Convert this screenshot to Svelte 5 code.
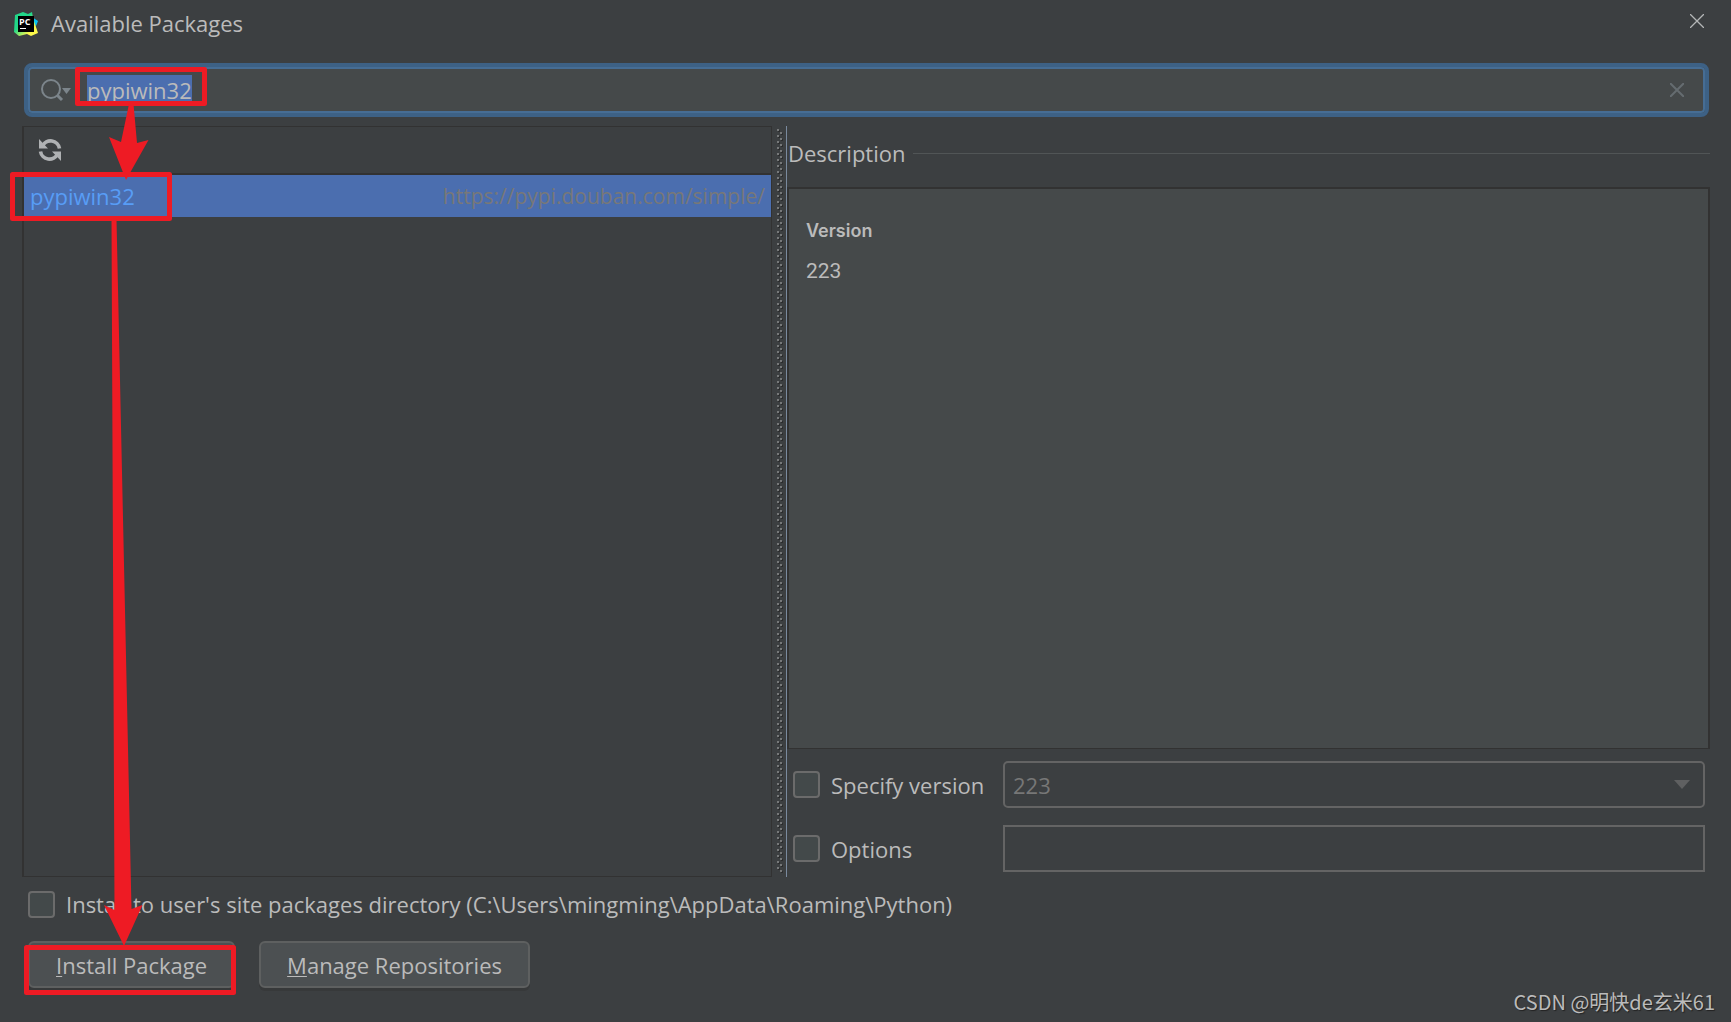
<script>
	import { onMount } from 'svelte';

	const packages = [{ name: 'pypiwin32', repo: 'https://pypi.douban.com/simple/' }];
	const versions = ['223'];

	let search = 'pypiwin32';
	let selected = 'pypiwin32';
	let version = '223';
	let specifyVersion = false;
	let useOptions = false;
	let options = '';
	let userSite = false;
	let searchBox;

	onMount(() => {
		searchBox.focus();
		searchBox.select();
	});

	function clearSearch() {
		search = '';
		searchBox.focus();
	}
</script>

<svelte:head>
	<title>Available Packages</title>
</svelte:head>

<div class="dialog">
	<header>
		<svg class="logo" viewBox="0 0 24 24" width="24" height="24">
			<defs>
				<linearGradient id="edge" x1="0" y1="0" x2="1" y2="1">
					<stop offset="0.4" stop-color="#21d789" />
					<stop offset="0.75" stop-color="#fcf84a" />
				</linearGradient>
			</defs>
			<path d="M18 5 24 9 22 14 17 12z" fill="#07c3f2" />
			<path d="M1 3 9 0 14 2 18 0 19 6 21 12 24 21 17 24 13 22 5 24 0 20z" fill="url(#edge)" />
			<rect x="4" y="4" width="16" height="16" />
			<text x="5" y="13" font-size="9" font-weight="700" fill="#fff">PC</text>
			<path d="M6 16h6v1H6z" fill="#fff" />
		</svg>
		<h1>Available Packages</h1>
		<button class="icon close" aria-label="Close">
			<svg viewBox="0 0 14 14" width="14" height="14">
				<path d="M0 0 14 14M14 0 0 14" stroke="#b4b6b7" stroke-width="1.3" />
			</svg>
		</button>
	</header>

	<div class="search">
		<svg viewBox="0 0 30 24" width="30" height="24">
			<circle cx="10" cy="11" r="9" fill="none" stroke="#7c858b" stroke-width="2" />
			<path d="M16 17 21 22" stroke="#7c858b" stroke-width="3" />
			<path d="M21 10h9l-4.500 6z" fill="#7c858b" />
		</svg>
		<input type="text" aria-label="Search packages" spellcheck="false" bind:this={searchBox} bind:value={search} />
		<button class="icon" aria-label="Clear" on:click={clearSearch}>
			<svg viewBox="0 0 14 14" width="14" height="14">
				<path d="M0 0 14 14M14 0 0 14" stroke="#656c70" stroke-width="2" />
			</svg>
		</button>
	</div>

	<main>
		<section class="list">
			<div class="toolbar">
				<button class="icon" aria-label="Reload list of packages">
					<svg viewBox="0 0 24 24" width="24" height="24">
						<g fill="none" stroke="#afb1b3" stroke-width="3.600">
							<path d="M4.500 8A9 9 0 0 1 21.500 10.500" />
							<path d="M19.500 16A9 9 0 0 1 2.500 13.500" />
						</g>
						<path d="M1 1V10.500H10zM23 23V13.500H14z" fill="#afb1b3" />
					</svg>
				</button>
			</div>
			<ul>
				{#each packages as pkg}
					<li>
						<button class:selected={selected === pkg.name} on:click={() => (selected = pkg.name)}>
							<span class="name">{pkg.name}</span>
							<span class="repo">{pkg.repo}</span>
						</button>
					</li>
				{/each}
			</ul>
		</section>

		<div class="splitter">
			<svg width="6" height="100%">
				<defs>
					<pattern id="grip" width="6" height="6" patternUnits="userSpaceOnUse">
						<path d="M1 1h2v2H1zM4 4h2v2H4z" fill="#2b2c2d" />
						<path d="M0 0h2v2H0zM3 3h2v2H3z" fill="#77797a" />
					</pattern>
				</defs>
				<rect width="6" height="100%" fill="url(#grip)" />
			</svg>
		</div>

		<section class="details">
			<h2>Description</h2>
			<div class="description">
				<h3>Version</h3>
				<p>{version}</p>
			</div>
			<div class="field">
				<label><input type="checkbox" bind:checked={specifyVersion} />Specify version</label>
				<div class="combo">
					<select aria-label="Version" disabled={!specifyVersion} bind:value={version}>
						{#each versions as v}
							<option>{v}</option>
						{/each}
					</select>
					<svg viewBox="0 0 16 9" width="16" height="9"><path d="M0 0h16L8 9z" fill="#5f6061" /></svg>
				</div>
			</div>
			<div class="field">
				<label><input type="checkbox" bind:checked={useOptions} />Options</label>
				<input class="options" type="text" aria-label="Options" disabled={!useOptions} bind:value={options} />
			</div>
		</section>
	</main>

	<label class="site">
		<input type="checkbox" bind:checked={userSite} />Install to user's site packages directory (C:\Users\mingming\AppData\Roaming\Python)
	</label>

	<footer>
		<button class="action"><u>I</u>nstall Package</button>
		<button class="action"><u>M</u>anage Repositories</button>
		<span class="watermark">CSDN @明快de玄米61</span>
	</footer>

	<!-- red marks showing the order of the steps -->
	<svg class="marks" width="240" height="1000" viewBox="0 0 240 1000">
		<g fill="none" stroke="#ee1b24" stroke-width="5" stroke-linejoin="round">
			<rect x="77.500" y="69.500" width="127" height="34" />
			<rect x="12.500" y="174.500" width="157" height="44" />
			<rect x="26.500" y="947.500" width="207" height="45" />
		</g>
		<g fill="#ee1b24">
			<path d="M129 104h4.500L137 143l11.500-3L126 180 109 137l12 5z" />
			<path d="M111.500 219h5L131.500 909l11-4L124 946 104 905l10.500 5z" />
		</g>
	</svg>
</div>

<style>
	:global(body) {
		background: #3c3f41;
	}

	.dialog {
		position: relative;
		box-sizing: border-box;
		min-height: 100vh;
		padding: 0 21px 34px 22px;
		display: flex;
		flex-direction: column;
		overflow: hidden;
		background: #3c3f41;
		color: #bbb;
		font: 22px/30px "Open Sans", "Noto Sans", sans-serif;
	}

	h1, h2, h3, p, ul {
		margin: 0;
		padding: 0;
		font: inherit;
	}

	button, input, select {
		font: inherit;
		color: inherit;
	}

	svg {
		display: block;
		flex: none;
	}

	.icon {
		padding: 0;
		border: 0;
		background: none;
	}

	header {
		display: flex;
		align-items: center;
		height: 48px;
		margin: 0 6px 15px -8px;
	}

	h1 {
		flex: 1;
		margin: 0 0 2px 13px;
	}

	.close {
		margin-bottom: 6px;
	}

	.search {
		display: flex;
		align-items: center;
		height: 46px;
		margin: 0 1px 9px 2px;
		padding: 0 21px 0 13px;
		border: 4px solid #3d6185;
		border-radius: 8px;
		box-shadow: inset 0 0 0 2px #466d94;
		background: #45494a;
	}

	.search input {
		flex: 1;
		min-width: 0;
		margin-left: 16px;
		padding: 0;
		border: 0;
		outline: 0;
		background: none;
	}

	.search input::selection {
		background: #4b6eaf;
		color: #bbb;
	}

	main {
		flex: 1;
		display: grid;
		grid-template-columns: minmax(0, 750fr) 14px minmax(0, 924fr);
	}

	.list {
		border: 1px solid #323232;
		border-left-width: 2px;
	}

	.toolbar {
		height: 46px;
		padding-left: 14px;
		display: flex;
		align-items: center;
		border-bottom: 2px solid #323232;
	}

	ul {
		list-style: none;
	}

	li button {
		width: 100%;
		height: 42px;
		padding: 0 6px;
		display: flex;
		align-items: center;
		justify-content: space-between;
		border: 0;
		background: none;
	}

	li .selected {
		background: #4b6eaf;
	}

	.name {
		color: #589df6;
	}

	.repo {
		font-size: 21px;
		color: #787878;
	}

	.splitter {
		padding: 3px 0 4px 5px;
	}

	.splitter svg {
		height: 100%;
	}

	.details {
		display: flex;
		flex-direction: column;
		border-left: 1px solid #7a8a9e;
	}

	h2 {
		display: flex;
		align-items: center;
		gap: 8px;
		height: 54px;
		margin-bottom: 7px;
		padding-left: 1px;
	}

	h2::after {
		content: "";
		flex: 1;
		height: 1px;
		background: #515556;
	}

	.description {
		flex: 1;
		margin-bottom: 12px;
		padding: 27px 17px;
		border: 2px solid #323232;
		border-bottom-width: 1px;
		background: #45494a;
		font-family: Roboto, "Liberation Sans", sans-serif;
		font-size: 21px;
	}

	h3 {
		margin-bottom: 10px;
		font: 600 18px/30px Inter, "Liberation Sans", sans-serif;
	}

	.field {
		display: grid;
		grid-template-columns: 210px 1fr;
		align-items: center;
		padding: 0 5px 0 6px;
		margin-bottom: 17px;
	}

	.field:last-child {
		margin-bottom: 5px;
	}

	label {
		display: flex;
		align-items: center;
		gap: 11px;
	}

	input[type="checkbox"] {
		appearance: none;
		flex: none;
		box-sizing: border-box;
		width: 27px;
		height: 27px;
		margin: 0;
		border: 2px solid #6b6b6b;
		border-radius: 4px;
		background: #43494a;
	}

	input[type="checkbox"]:checked {
		background: #4b6eaf;
	}

	.combo {
		display: grid;
		align-items: center;
	}

	.combo > * {
		grid-area: 1 / 1;
	}

	.combo svg {
		justify-self: end;
		margin-right: 15px;
		pointer-events: none;
	}

	select, .options {
		appearance: none;
		box-sizing: border-box;
		width: 100%;
		height: 47px;
		padding: 0 8px;
		border: 2px solid #646464;
		border-radius: 5px;
		background: #3c3f41;
	}

	select:disabled {
		color: #777;
		opacity: 1;
	}

	.options {
		border-radius: 0;
	}

	.site {
		margin: 12px 0 22px 6px;
	}

	footer {
		display: flex;
		gap: 24px;
		margin-left: 6px;
	}

	.action {
		height: 47px;
		padding: 0 26px;
		border: 2px solid #5e6060;
		border-radius: 6px;
		background: #4c5052;
		box-shadow: 0 3px 0 #37393a;
	}

	u {
		text-decoration-thickness: 1px;
		text-underline-offset: 2px;
	}

	.watermark {
		margin: 0 -5px -29px auto;
		align-self: flex-end;
		font: 20px/30px "Noto Sans CJK SC", sans-serif;
		text-shadow: 1px 1px 1px #222;
	}

	.marks {
		position: absolute;
		top: 0;
		left: 0;
		pointer-events: none;
	}
</style>
